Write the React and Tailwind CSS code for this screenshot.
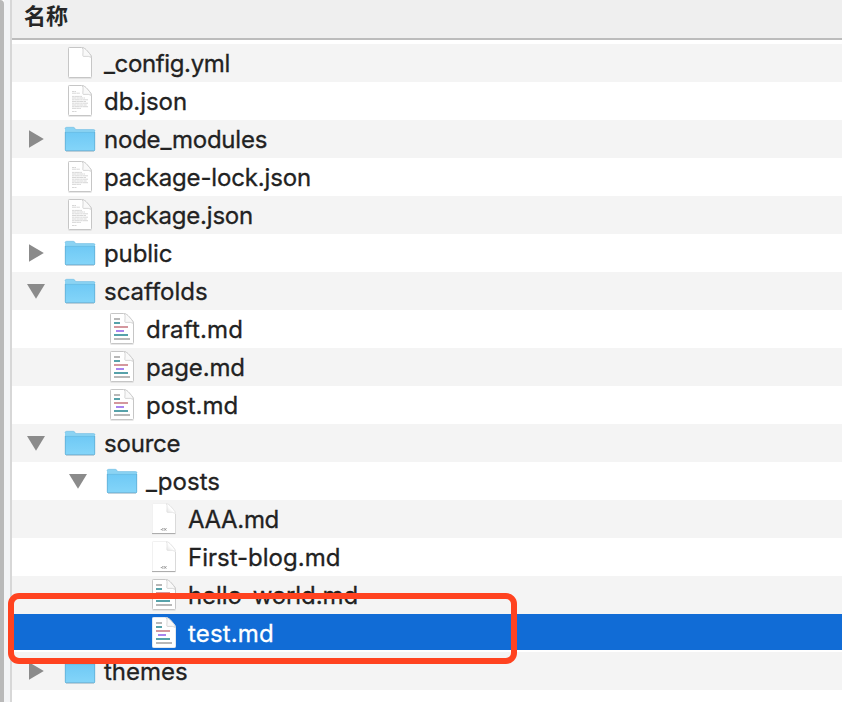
const files = [
  { name: "_config.yml", kind: "blank", depth: 0, tracking: "tracking-[-0.36px]" },
  { name: "db.json", kind: "text", depth: 0, tracking: "tracking-[-0.05px]" },
  { name: "node_modules", kind: "folder", depth: 0, arrow: "closed", tracking: "tracking-[-0.22px]" },
  { name: "package-lock.json", kind: "text", depth: 0, tracking: "tracking-[-0.15px]" },
  { name: "package.json", kind: "text", depth: 0, tracking: "tracking-[-0.2px]" },
  { name: "public", kind: "folder", depth: 0, arrow: "closed", tracking: "tracking-[-0.1px]" },
  { name: "scaffolds", kind: "folder", depth: 0, arrow: "open", tracking: "tracking-[-0.02px]" },
  { name: "draft.md", kind: "markdown", depth: 1, tracking: "tracking-[0.18px]" },
  { name: "page.md", kind: "markdown", depth: 1, tracking: "tracking-[-0.12px]" },
  { name: "post.md", kind: "markdown", depth: 1, tracking: "tracking-normal" },
  { name: "source", kind: "folder", depth: 0, arrow: "open", tracking: "tracking-[-0.2px]" },
  { name: "_posts", kind: "folder", depth: 1, arrow: "open", tracking: "tracking-[0.05px]" },
  { name: "AAA.md", kind: "plain", depth: 2, tracking: "tracking-[-0.35px]" },
  { name: "First-blog.md", kind: "plain", depth: 2, tracking: "tracking-normal" },
  { name: "hello-world.md", kind: "markdown", depth: 2, tracking: "tracking-[-0.1px]" },
  { name: "test.md", kind: "markdown", depth: 2, selected: true, tracking: "tracking-[0.15px]" },
  { name: "themes", kind: "folder", depth: 0, arrow: "closed", tracking: "tracking-normal" },
];

const indents = ["pl-[12px]", "pl-[54px]", "pl-[96px]"];

function Arrow({ state }) {
  return (
    <svg className="h-[38px] w-6 shrink-0" viewBox="0 0 24 38" fill="#8b8b8b">
      {state === "closed" && <path d="M5 10.2 19.8 19 5 27.8Z" />}
      {state === "open" && <path d="M3 12H21L12 26.8Z" />}
    </svg>
  );
}

function Folder() {
  return (
    <svg className="h-[38px] w-8 shrink-0" viewBox="0 0 32 38">
      <defs>
        <linearGradient id="folder-front" x1="0" y1="0" x2="0" y2="1">
          <stop offset="0" stopColor="#6fc9f5" />
          <stop offset="1" stopColor="#84d5f9" />
        </linearGradient>
      </defs>
      <path d="M1 9Q1 7.3 2.7 7.3H9.2Q10.2 7.3 10.8 8.2L11.7 9.6H29.5Q31 9.6 31 11V31H1Z" fill="#8bd3f3" />
      <path d="M1 9Q1 7.3 2.7 7.3H9.2Q10.2 7.3 10.8 8.2L11.7 9.6H29.5Q31 9.6 31 11" fill="none" stroke="#6cbbe0" strokeWidth=".6" />
      <path d="M1 12.4H31V29.6Q31 31 29.6 31H2.4Q1 31 1 29.6Z" fill="url(#folder-front)" />
      <path d="M1 12.4H31" stroke="#61b7e2" strokeWidth=".7" />
      <path d="M1.3 12V29.6Q1.3 30.8 2.5 30.8H29.5Q30.7 30.8 30.7 29.6V12" fill="none" stroke="#5da9cf" strokeWidth=".7" />
      <path d="M2 31.3H30" stroke="#a5b6c0" strokeWidth=".6" />
    </svg>
  );
}

const textLines = [
  [10.5, 4], [12.2, 8], [15.4, 10], [17, 13], [18.8, 16], [20.5, 14], [22.2, 16],
  [24, 15], [25.7, 16], [27.4, 9], [30.5, 4.5],
];

const codeLines = [
  [9, 8, 6, "#b8b8b8"],
  [13, 8, 6, "#57a2aa"],
  [17, 8, 14, "#d4979e"],
  [21, 10, 8, "#a984ee"],
  [25, 8, 14, "#57a2aa"],
  [29, 8, 16, "#b8b8b8"],
];

function Page({ kind, selected }) {
  const plain = kind === "plain";
  return (
    <svg className="h-[38px] w-8 shrink-0" viewBox="0 0 32 38">
      <defs>
        <linearGradient id="fold-shade" x1="0" y1="1" x2="1" y2="0">
          <stop offset="0" stopColor="#dedede" />
          <stop offset=".5" stopColor="#fff" />
          <stop offset="1" stopColor="#e9e9e9" />
        </linearGradient>
      </defs>
      {!plain && !selected && <path d="M4.5 34.2H27.5" stroke="#d5d5d5" strokeWidth=".8" />}
      <path
        d="M5.3 3.5H17.5Q20 3.5 22 5.6L26 10Q27.5 11.7 27.5 14V32.6Q27.5 33.5 26.7 33.5H5.3Q4.5 33.5 4.5 32.6V4.3Q4.5 3.5 5.3 3.5Z"
        fill="#fff"
        stroke={plain ? "#f1f1f1" : selected ? "#e2e8f0" : "#c6c6c6"}
        strokeWidth="1"
      />
      <path
        d="M18.2 3.6Q19.4 5 19 8.2L18.8 11.6Q18.8 12.5 20 12.4Q25 11.8 27.3 13.4Q27.2 11.5 25.6 9.6L22 5.6Q20.3 3.8 18.2 3.6Z"
        fill={plain ? "url(#fold-shade)" : "#f9f9f9"}
        stroke={plain ? "#dedede" : "#c6c6c6"}
        strokeWidth=".7"
      />
      {kind === "text" &&
        textLines.map(([y, w], i) => (
          <path
            key={y}
            d={`M8 ${y - 1}h${w}`}
            stroke="#c9c9c9"
            strokeWidth=".75"
            strokeDasharray={i % 2 ? "4 .4 2.5 .3" : "2.5 .3 5 .4"}
          />
        ))}
      {kind === "markdown" &&
        codeLines.map(([y, x, w, color]) => (
          <path key={y} d={`M${x} ${y}h${w}`} stroke={color} strokeWidth="2" />
        ))}
      {plain && (
        <>
          <path d="M27.5 14V33" stroke="#d4d4d4" strokeWidth=".8" />
          <path d="M4 33.6H27.5" stroke="#929292" strokeWidth=".8" />
          <path d="M12.8 29.6h1.2M14.8 28.2v2.6M16 28.2l2.4 2.6M18.4 28.2l-2.4 2.6" stroke="#606060" strokeWidth=".8" strokeDasharray="1 .4" />
        </>
      )}
    </svg>
  );
}

function Row({ file, striped }) {
  return (
    <div className={`h-[38px] shrink-0 ${striped ? "bg-[#f4f4f4]" : "bg-white"}`}>
      <div
        className={`flex items-center ${indents[file.depth]} ${
          file.selected ? "h-9 bg-[#116cd6] text-white" : "h-[38px] text-[#222]"
        }`}
      >
        <div className="flex h-[38px] shrink-0 self-start">
          <Arrow state={file.arrow} />
          <span className="w-4" />
          {file.kind === "folder" ? <Folder /> : <Page kind={file.kind} selected={file.selected} />}
          <span
            className={`ml-2 text-[24px] leading-[40px] whitespace-pre [-webkit-text-stroke:0.3px_currentColor] ${file.tracking}`}
          >
            {file.name}
          </span>
        </div>
      </div>
    </div>
  );
}

export default function App() {
  return (
    <div className="relative flex h-[702px] w-[842px] overflow-hidden bg-white font-['Inter','Noto_Sans_CJK_SC',sans-serif]">
      <div className="w-1 shrink-0 rounded-tr-[4px] bg-[#b9b9b9]" />
      <div className="w-1.5 shrink-0 bg-[#f3f4f6]" />
      <div className="w-0.5 shrink-0 bg-[#d7d7d7]" />
      <main className="flex min-w-0 flex-1 flex-col">
        <header className="mb-1 h-10 shrink-0 border-b-2 border-[#bcbcbc] bg-[#efefef] pl-3 font-['Noto_Sans_CJK_SC',sans-serif] text-[22px] leading-[28px] font-bold text-[#262626]">
          名称
        </header>
        {files.map((file, index) => (
          <Row key={file.name} file={file} striped={index % 2 === 0} />
        ))}
      </main>
      <div className="absolute top-[593px] left-[8px] h-[71px] w-[509px] rounded-[11px] border-[6px] border-[#ff4320]" />
    </div>
  );
}
